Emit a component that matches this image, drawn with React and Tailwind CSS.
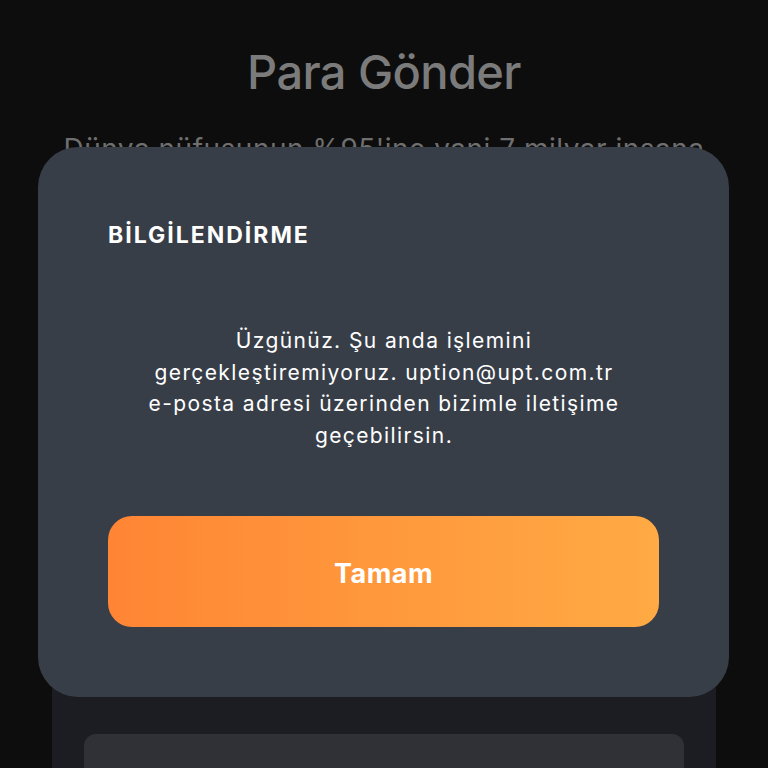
import React from "react";

const App = () => {
  return (
    <div
      className="relative h-[768px] w-[768px] overflow-hidden bg-[#0d0d0d]"
      style={{ fontFamily: "Inter, 'Noto Sans', sans-serif" }}
    >
      {/* page behind the dialog */}
      <div className="flex flex-col items-center pt-[44px]">
        <h1 className="text-[47px] font-medium leading-[56px] tracking-[-0.6px] text-[#7b7b7b]">
          Para Gönder
        </h1>
        <p className="mt-[32px] whitespace-nowrap text-[28px] leading-[34px] tracking-[0.5px] text-[#6f6f6f]">
          Dünya nüfusunun %95'ine yani 7 milyar insana
        </p>
        <div className="mt-[500px] h-[200px] w-[664px] bg-[#1b1d22] px-[32px] pt-[68px]">
          <div className="h-[120px] rounded-[12px] bg-[#2f3136]" />
        </div>
      </div>

      {/* dialog */}
      <div className="absolute left-[38px] top-[147px] flex h-[550px] w-[691px] flex-col rounded-[40px] bg-[#383e48] px-[70px] pt-[74px]">
        <h2 className="text-[23px] font-bold leading-[28px] tracking-[2px] text-white">
          BİLGİLENDİRME
        </h2>
        <p className="mx-auto mt-[76px] w-[552px] text-center text-[21px] leading-[31.6px] tracking-[1.4px] text-white">
          Üzgünüz. Şu anda işlemini
          <br />
          gerçekleştiremiyoruz. uption@upt.com.tr
          <br />
          e-posta adresi üzerinden bizimle iletişime
          <br />
          geçebilirsin.
        </p>
        <button className="mt-auto mb-[70px] flex h-[111px] w-full items-center justify-center rounded-[24px] bg-gradient-to-r from-[#ff8534] to-[#ffaa44] pt-[6px] text-[27px] font-bold tracking-[0.5px] text-white">
          Tamam
        </button>
      </div>
    </div>
  );
};

export default App;
